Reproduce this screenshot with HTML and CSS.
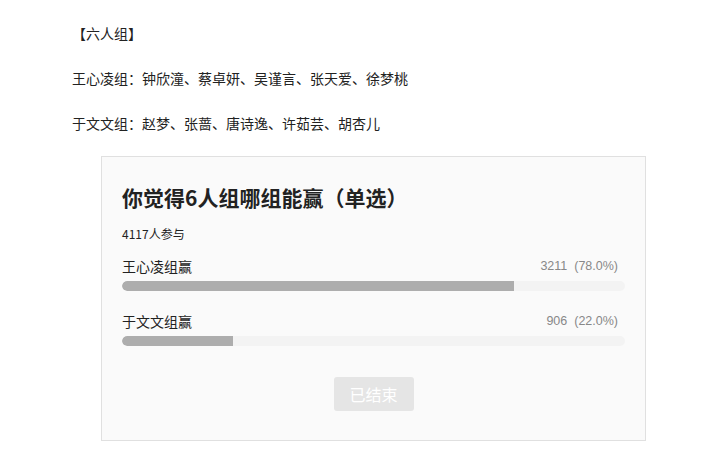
FILE: index.html
```
<!DOCTYPE html>
<html lang="zh-CN">
<head>
    <meta charset="UTF-8">
    <meta name="viewport" content="width=device-width, initial-scale=1.0">
    <title>六人组投票</title>
    <link rel="stylesheet" href="styles.css">
</head>
<body>
    <div class="article">
        <p>【六人组】</p>
        <p>王心凌组：钟欣潼、蔡卓妍、吴谨言、张天爱、徐梦桃</p>
        <p>于文文组：赵梦、张蔷、唐诗逸、许茹芸、胡杏儿</p>

        <div class="vote-card">
            <h2 class="vote-title">你觉得6人组哪组能赢（单选）</h2>
            <div class="vote-count">4117人参与</div>

            <div class="vote-option">
                <div class="option-head">
                    <span class="option-name">王心凌组赢</span>
                    <span class="option-num">3211&nbsp;&nbsp;(78.0%)</span>
                </div>
                <div class="bar-track"><div class="bar-fill" style="width: 78%"></div></div>
            </div>

            <div class="vote-option">
                <div class="option-head">
                    <span class="option-name">于文文组赢</span>
                    <span class="option-num">906&nbsp;&nbsp;(22.0%)</span>
                </div>
                <div class="bar-track"><div class="bar-fill" style="width: 22%"></div></div>
            </div>

            <div class="vote-actions">
                <button class="vote-button" disabled>已结束</button>
            </div>
        </div>
    </div>
</body>
</html>
```

FILE: styles.css
```
body {
    font-family: "Noto Sans CJK SC", "Liberation Sans", sans-serif;
    font-size: 14px;
    color: #222;
    background-color: #fff;
    margin: 0;
    padding: 0;
}
.article {
    padding: 21px 0 0 72px;
}
.article p {
    margin: 0 0 21px;
    line-height: 24px;
}
.vote-card {
    box-sizing: border-box;
    width: 545px;
    margin-left: 29px;
    padding: 26px 20px 29px;
    background-color: #fafafa;
    border: 1px solid #e0e0e0;
}
.vote-title {
    margin: 0;
    font-size: 21px;
    line-height: 28px;
    font-weight: bold;
    color: #222;
}
.vote-count {
    margin-top: 15px;
    font-size: 12px;
    line-height: 16px;
    color: #222;
}
.vote-option {
    margin-top: 14px;
}
.vote-option + .vote-option {
    margin-top: 20px;
}
.option-head {
    display: flex;
    justify-content: space-between;
    align-items: center;
    line-height: 20px;
    padding-right: 7px;
}
.option-name {
    font-size: 14px;
    color: #222;
}
.option-num {
    font-family: "Liberation Sans", Arial, sans-serif;
    font-size: 12.5px;
    color: #888;
}
.bar-track {
    margin-top: 5px;
    height: 10px;
    background-color: #f3f3f3;
    border-radius: 5px;
    overflow: hidden;
}
.bar-fill {
    height: 100%;
    background-color: #adadad;
    border-radius: 5px 0 0 5px;
}
.vote-actions {
    display: flex;
    justify-content: center;
    margin-top: 31px;
}
.vote-button {
    width: 80px;
    height: 34px;
    border: none;
    border-radius: 3px;
    background-color: #e5e5e5;
    color: #fff;
    font-family: "Noto Sans CJK SC", sans-serif;
    font-size: 16px;
    padding: 0;
}
```
